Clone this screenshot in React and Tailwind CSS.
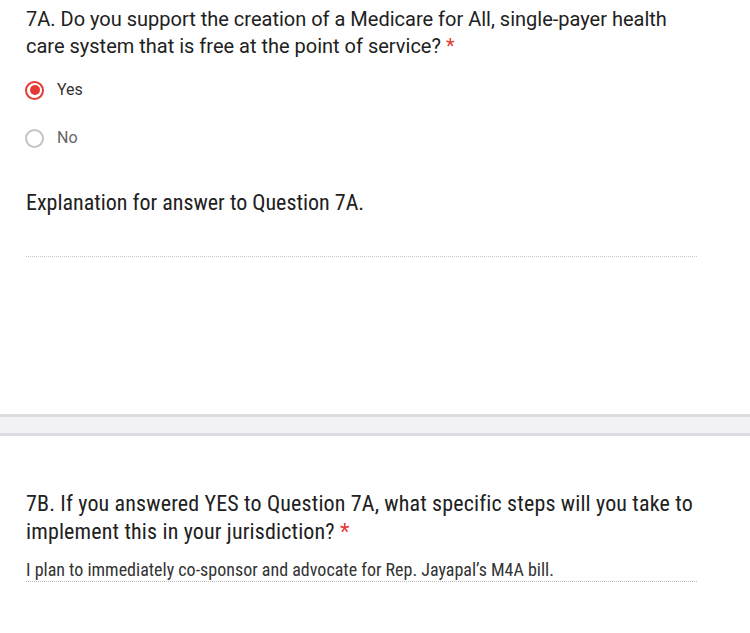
import React from 'react';

const roboto = { fontFamily: 'Roboto, "Noto Sans", sans-serif' };

function Radio({ checked, label }) {
  return (
    <div className="flex items-center h-[24px]">
      <span
        className={`flex items-center justify-center w-[19px] h-[19px] rounded-full border-2 ml-[25px] ${
          checked ? 'border-[#e53935]' : 'border-[#c4c4c4]'
        }`}
      >
        {checked && <span className="block w-[10px] h-[10px] rounded-full bg-[#e53935]" />}
      </span>
      <span className={`ml-[13px] text-[16px] ${checked ? 'text-[#333]' : 'text-[#666]'}`}>{label}</span>
    </div>
  );
}

export default function App() {
  return (
    <div className="w-[750px] h-[633px] bg-white overflow-hidden" style={roboto}>
      <div className="pt-[6px] pl-[26px] pr-[50px]">
        <h2 className="text-[20px] leading-[27px] text-[#212121]">
          7A. Do you support the creation of a Medicare for All, single-payer health care system that is free at the point of service? <span className="text-[#e53935]">*</span>
        </h2>
      </div>

      <div className="mt-[18px] flex flex-col gap-[24px]">
        <Radio checked label="Yes" />
        <Radio label="No" />
      </div>

      <div className="pl-[26px] pr-[53px] mt-[39px]">
        <p className="text-[22px] leading-[28px] text-[#212121] [font-stretch:condensed]">Explanation for answer to Question 7A.</p>
        <div className="mt-[39px] border-b border-dotted border-[#c8c8c8]" />
      </div>

      <div className="mt-[157px] h-[22px] bg-[#f1f1f6] border-y-[3px] border-[#dcdce0]" />

      <div className="pl-[26px] pr-[40px] pt-[54px]">
        <h2 className="text-[22px] leading-[28px] text-[#212121] [font-stretch:condensed] tracking-[0.15px]">
          7B. If you answered YES to Question 7A, what specific steps will you take to implement this in your jurisdiction? <span className="text-[#e53935]">*</span>
        </h2>
        <p className="mt-[14px] text-[18px] leading-[20px] text-[#333] [font-stretch:condensed]">
          I plan to immediately co-sponsor and advocate for Rep. Jayapal’s M4A bill.
        </p>
        <div className="mt-[1px] mr-[13px] border-b border-dotted border-[#bdbdbd]" />
      </div>
    </div>
  );
}
